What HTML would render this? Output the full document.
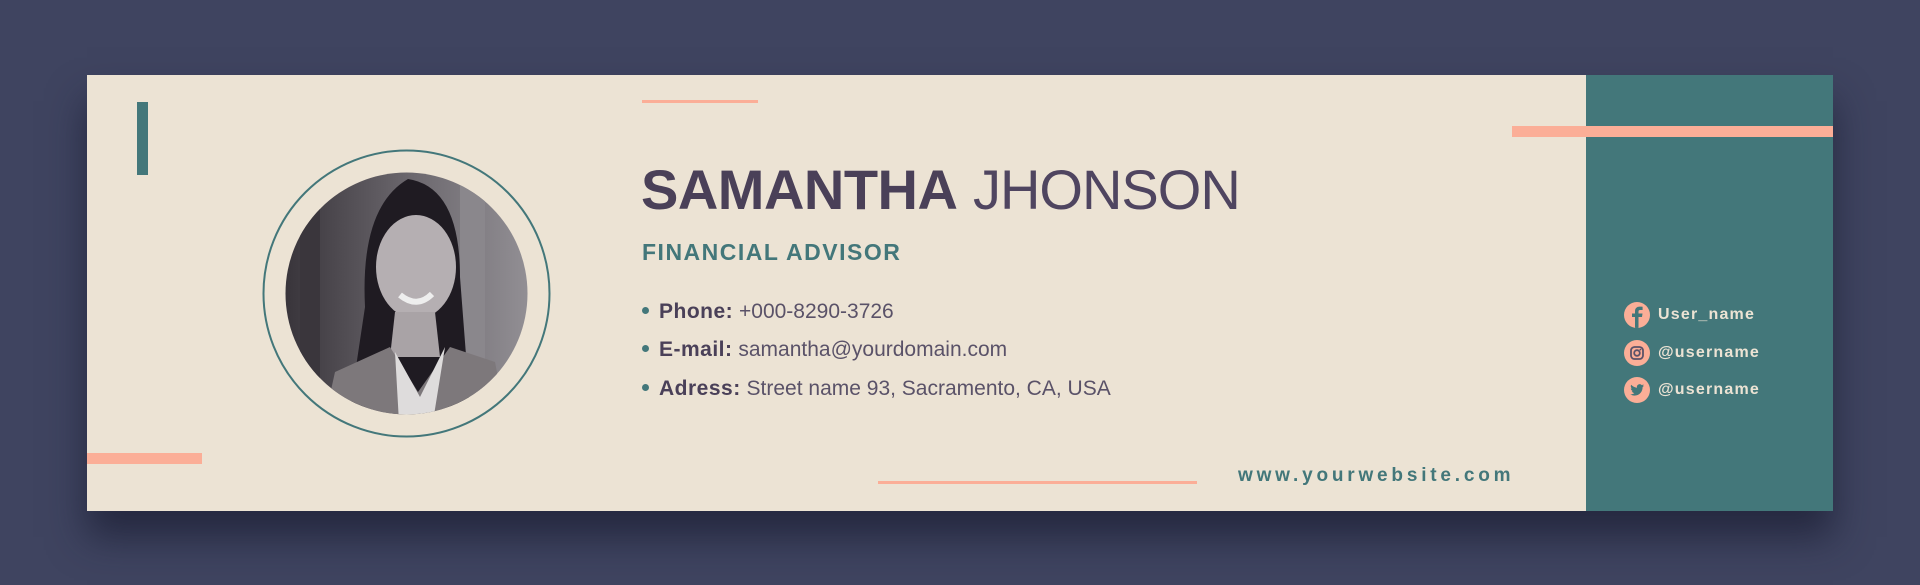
<!DOCTYPE html>
<html><head><meta charset="utf-8"><style>
*{margin:0;padding:0;box-sizing:border-box}
body{width:1920px;height:585px;background:#3f4460;position:relative;overflow:hidden;font-family:"Liberation Sans",sans-serif}
.abs{position:absolute}
.card{left:87px;top:75px;width:1746px;height:436px;background:#ece3d4;box-shadow:0 26px 36px rgba(25,28,50,.7)}
.teal{left:1586px;top:75px;width:247px;height:436px;background:#43777a}
.name{left:641px;top:162px;font-size:56px;color:#4a4058;white-space:nowrap;line-height:1}
.name b{font-weight:700;letter-spacing:-0.5px}
.name span{font-weight:400;letter-spacing:-1px;color:#4f4560}
.title{left:642px;top:239px;font-size:23px;font-weight:700;color:#43777a;letter-spacing:1.5px}
.li{left:642px;font-size:21px;color:#5a5268;white-space:nowrap}
.li i{display:inline-block;width:7px;height:7px;border-radius:50%;background:#43777a;margin-right:10px;vertical-align:middle;position:relative;top:-2px}
.li b{color:#4a4058;letter-spacing:.5px}
.web{left:1238px;top:465px;font-size:19px;font-weight:700;color:#43777a;letter-spacing:3.8px}
.soc{left:1624px;height:26px;display:flex;align-items:center;color:#ece3d4;font-size:16px;font-weight:700;letter-spacing:1.2px}
.soc .ic{width:26px;height:26px;border-radius:50%;background:#fbae97;margin-right:8px;display:flex;align-items:center;justify-content:center;overflow:hidden}
</style></head><body>
<div class="abs card"></div>
<div class="abs teal"></div>
<div class="abs" style="left:137px;top:102px;width:11px;height:73px;background:#43777a"></div>
<div class="abs" style="left:642px;top:100px;width:116px;height:3px;background:#fbae97"></div>
<div class="abs" style="left:1512px;top:126px;width:321px;height:11px;background:#fbae97"></div>
<div class="abs" style="left:87px;top:453px;width:115px;height:11px;background:#fbae97"></div>
<div class="abs" style="left:878px;top:481px;width:319px;height:3px;background:#fbae97"></div>

<svg class="abs" style="left:260px;top:147px" width="293" height="293" viewBox="0 0 293 293">
<defs><clipPath id="c"><circle cx="146.5" cy="146.5" r="121"/></clipPath>
<linearGradient id="bg" x1="0" x2="1"><stop offset="0" stop-color="#2e2a30"/><stop offset=".5" stop-color="#6a666c"/><stop offset="1" stop-color="#9a979c"/></linearGradient></defs>
<circle cx="146.5" cy="146.5" r="143" fill="none" stroke="#43777a" stroke-width="2"/>
<g clip-path="url(#c)">
<rect width="293" height="293" fill="url(#bg)"/>
<rect x="40" y="30" width="20" height="230" fill="#3a363c"/>
<rect x="200" y="30" width="25" height="230" fill="#8a878c"/>
<path d="M105 160 Q100 60 148 32 Q200 40 200 130 L210 260 L90 260Z" fill="#1f1b22"/>
<ellipse cx="156" cy="120" rx="40" ry="52" fill="#b5afb2"/>
<path d="M135 165 L175 165 L180 210 L130 210Z" fill="#a9a3a6"/>
<path d="M140 148 Q157 162 172 147" stroke="#eee" stroke-width="6" fill="none"/>
<path d="M60 293 L75 225 L130 200 L158 245 L190 200 L235 215 L250 293Z" fill="#7d787b"/>
<path d="M135 205 L160 250 L185 200 L170 293 L140 293Z" fill="#dedcdc"/>
</g></svg>

<div class="abs name"><b>SAMANTHA</b> <span>JHONSON</span></div>
<div class="abs title">FINANCIAL ADVISOR</div>
<div class="abs li" style="top:300px"><i></i><b>Phone:</b> +000-8290-3726</div>
<div class="abs li" style="top:338px"><i></i><b>E-mail:</b> samantha@yourdomain.com</div>
<div class="abs li" style="top:377px"><i></i><b>Adress:</b> Street name 93, Sacramento, CA, USA</div>
<div class="abs web">www.yourwebsite.com</div>

<div class="abs soc" style="top:302px"><div class="ic"><svg width="26" height="26" viewBox="0 0 26 26"><path d="M14.5 26 V15 H18 L18.5 11.5 H14.5 V9.5 C14.5 8.5 15 8 16 8 H18.6 V4.8 C17.8 4.7 16.8 4.6 15.6 4.6 C12.8 4.6 11 6.3 11 9.2 V11.5 H8 V15 H11 V26Z" fill="#43777a"/></svg></div>User_name</div>
<div class="abs soc" style="top:340px"><div class="ic"><svg width="26" height="26" viewBox="0 0 26 26"><rect x="7" y="7" width="12" height="12" rx="3.5" fill="none" stroke="#5a5268" stroke-width="1.8"/><circle cx="13" cy="13" r="2.8" fill="none" stroke="#5a5268" stroke-width="1.8"/><circle cx="16.4" cy="9.6" r=".9" fill="#5a5268"/></svg></div>@username</div>
<div class="abs soc" style="top:377px"><div class="ic"><svg width="26" height="26" viewBox="0 0 26 26"><path d="M20 8.5c-.5.2-1 .4-1.600.4.6-.3 1-.9 1.2-1.5-.5.3-1.1.6-1.8.7a2.8 2.8 0 0 0-4.8 2.6c-2.3-.1-4.4-1.2-5.8-2.9-.8 1.300-.4 3 .9 3.8-.5 0-.9-.1-1.3-.3 0 1.4 1 2.6 2.3 2.8-.4.1-.9.1-1.3 0 .4 1.1 1.4 1.9 2.6 2-1.2.9-2.7 1.4-4.2 1.2 1.3.8 2.8 1.3 4.3 1.3 5.3 0 8.2-4.5 8.1-8.5.6-.4 1-.9 1.4-1.6z" fill="#43777a"/></svg></div>@username</div>
</body></html>
